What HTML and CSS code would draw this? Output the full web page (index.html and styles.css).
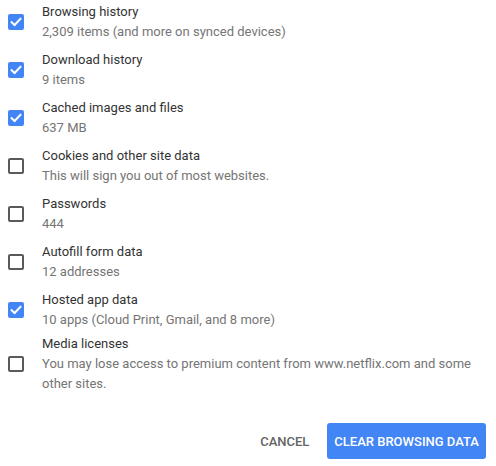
FILE: index.html
```html
<!DOCTYPE html>
<html>
<head>
<meta charset="utf-8">
<link rel="stylesheet" href="styles.css">
</head>
<body>
<div class="dialog">
  <div class="list">
    <div class="row">
      <span class="box checked"><svg viewBox="0 0 16 16"><polyline points="3.6,8.2 6.6,11 12.4,4.9" /></svg></span>
      <div class="label"><div class="title">Browsing history</div><div class="sub">2,309 items (and more on synced devices)</div></div>
    </div>
    <div class="row">
      <span class="box checked"><svg viewBox="0 0 16 16"><polyline points="3.6,8.2 6.6,11 12.4,4.9" /></svg></span>
      <div class="label"><div class="title">Download history</div><div class="sub">9 items</div></div>
    </div>
    <div class="row">
      <span class="box checked"><svg viewBox="0 0 16 16"><polyline points="3.6,8.2 6.6,11 12.4,4.9" /></svg></span>
      <div class="label"><div class="title">Cached images and files</div><div class="sub">637 MB</div></div>
    </div>
    <div class="row">
      <span class="box"></span>
      <div class="label"><div class="title">Cookies and other site data</div><div class="sub">This will sign you out of most websites.</div></div>
    </div>
    <div class="row">
      <span class="box"></span>
      <div class="label"><div class="title">Passwords</div><div class="sub">444</div></div>
    </div>
    <div class="row">
      <span class="box"></span>
      <div class="label"><div class="title">Autofill form data</div><div class="sub">12 addresses</div></div>
    </div>
    <div class="row">
      <span class="box checked"><svg viewBox="0 0 16 16"><polyline points="3.6,8.2 6.6,11 12.4,4.9" /></svg></span>
      <div class="label"><div class="title">Hosted app data</div><div class="sub">10 apps (Cloud Print, Gmail, and 8 more)</div></div>
    </div>
    <div class="row">
      <span class="box"></span>
      <div class="label"><div class="title">Media licenses</div><div class="sub">You may lose access to premium content from www.netflix.com and some other sites.</div></div>
    </div>
  </div>
  <div class="actions">
    <button class="btn cancel">Cancel</button>
    <button class="btn primary">Clear browsing data</button>
  </div>
</div>
</body>
</html>
```
FILE: styles.css
```css
html, body {
  margin: 0;
  padding: 0;
  background: #ffffff;
}
body {
  font-family: Roboto, "Noto Sans", "Liberation Sans", sans-serif;
  font-size: 13px;
  line-height: 20px;
}
.dialog {
  width: 496px;
  height: 466px;
  overflow: hidden;
}
.list {
  margin-top: -2px;
}
.row {
  display: flex;
  align-items: center;
  min-height: 48px;
  padding-left: 8px;
  padding-right: 10px;
}
.box {
  flex: none;
  width: 16px;
  height: 16px;
  box-sizing: border-box;
  border: 2px solid #5a5a5a;
  border-radius: 2px;
  margin-right: 18px;
  position: relative;
}
.box.checked {
  background: #4285f4;
  border-color: #4285f4;
}
.box svg {
  position: absolute;
  left: -2px;
  top: -2px;
  width: 16px;
  height: 16px;
}
.box svg polyline {
  fill: none;
  stroke: #ffffff;
  stroke-width: 2;
  stroke-linecap: square;
}
.label {
  flex: 1;
}
.title {
  color: #333333;
}
.sub {
  color: #757575;
}
.actions {
  display: flex;
  justify-content: flex-end;
  align-items: center;
  gap: 10px;
  margin-top: 29px;
  padding-right: 10px;
}
.btn {
  font-family: Roboto, "Noto Sans", "Liberation Sans", sans-serif;
  font-size: 13px;
  font-weight: 500;
  text-transform: uppercase;
  height: 36px;
  border: none;
  border-radius: 3px;
  padding: 0 8px;
  background: transparent;
}
.cancel {
  color: #646464;
}
.primary {
  background: #4285f4;
  color: #ffffff;
  padding: 0 7px;
}
```
